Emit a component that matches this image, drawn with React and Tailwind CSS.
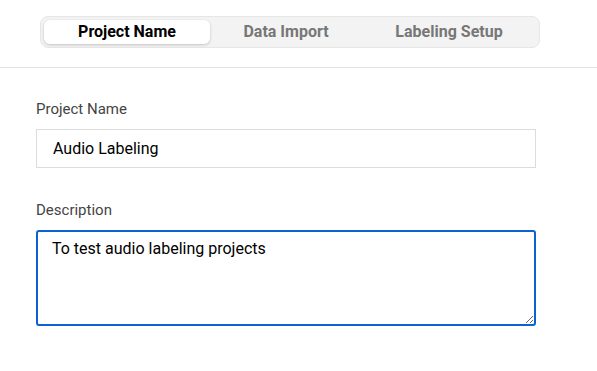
import React, { useState } from "react";

const tabs = [
    { name: "Project Name", width: "w-[166px]" },
    { name: "Data Import", width: "w-[152px]" },
    { name: "Labeling Setup", width: "flex-1" },
];

export default function App() {
    const [active, setActive] = useState(0);
    const [name, setName] = useState("Audio Labeling");
    const [desc, setDesc] = useState("To test audio labeling projects");

    return (
        <div className="w-[597px] h-[371px] bg-white font-['Roboto',sans-serif] text-base text-black">
            <div className="pt-4 pl-10 pr-[57px] pb-[19px] border-b border-[#e3e3e3]">
                <div className="flex h-8 p-[3px] bg-[#f3f3f3] border border-[#e6e6e6] rounded-lg">
                    {tabs.map((t, i) => (
                        <button
                            key={t.name}
                            onClick={() => setActive(i)}
                            className={`${t.width} rounded-md font-bold leading-none ${i == active ? "bg-white text-black shadow-[0_1px_3px_rgba(0,0,0,0.2)]" : "text-[#777]"}`}
                        >
                            {t.name}
                        </button>
                    ))}
                </div>
            </div>
            <div className="px-9 pt-[32px]">
                <label className="block text-[15px] text-[#444] leading-[18px]">Project Name</label>
                <input
                    value={name}
                    onChange={(e) => setName(e.target.value)}
                    className="mt-[11px] block w-[500px] h-[39px] px-4 border border-[#dcdcdc] outline-none"
                />
                <label className="block mt-[33px] text-[15px] text-[#444] leading-[18px]">Description</label>
                <textarea
                    value={desc}
                    onChange={(e) => setDesc(e.target.value)}
                    className="mt-[11px] block w-[500px] h-[96px] px-[14px] py-[7px] border-2 border-[#0b62d3] rounded-[3px] outline-none leading-[20px]"
                />
            </div>
        </div>
    );
}
